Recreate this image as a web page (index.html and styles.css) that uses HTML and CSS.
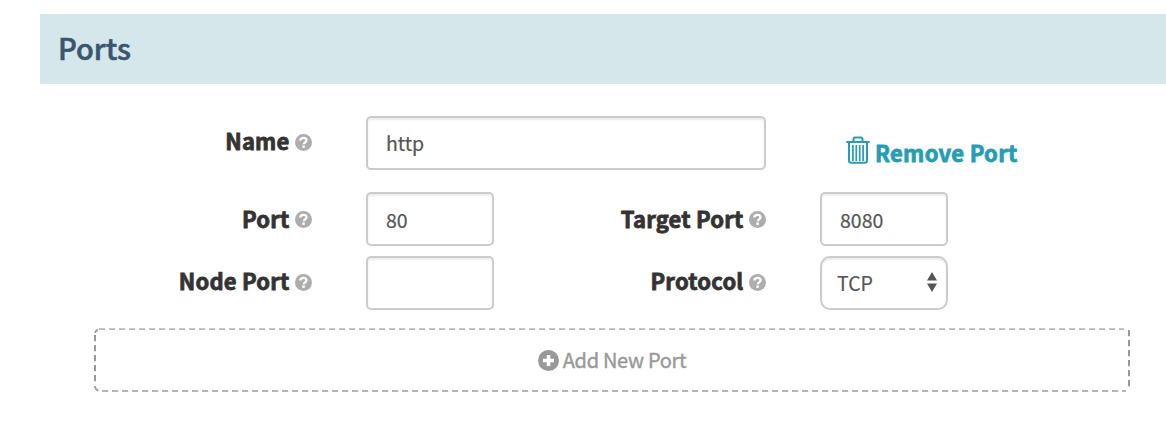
FILE: index.html
```html
<!DOCTYPE html>
<html lang="en">
<head>
<meta charset="utf-8">
<title>Ports</title>
<link rel="stylesheet" href="styles.css">
</head>
<body>
<svg class="defs" width="0" height="0">
  <symbol id="help" viewBox="0 0 17 17">
    <circle cx="8.5" cy="8.5" r="8.5" fill="#adadad"/>
    <path d="M5.300 6.500C5.400 4.500 6.700 3.900 8.600 3.900c1.800 0 2.900.9 2.900 2.400 0 2.200-2.600 1.900-2.600 3.900" fill="none" stroke="#fff" stroke-width="2.300"/>
    <path d="M7.300 11.400h2.500v2.500H7.300z" fill="#fff"/>
  </symbol>
</svg>
<section class="panel">
  <h2 class="panel-title"><span>Ports</span></h2>
  <form class="form">
    <div class="row row-name">
      <label class="label" for="name"><span>Name</span><svg class="help"><use href="#help"/></svg></label>
      <input class="field wide" id="name" value="http">
      <a class="remove"><svg class="trash" viewBox="0 0 24 28"><g fill="none" stroke="#259db5" stroke-width="2"><path d="M.3 6h23.400M7.500 5.800V3q0-1.500 1.500-1.500h6Q16.500 1.500 16.500 3V5.800M3 6.500V24.500q0 2.300 2.200 2.300H18.800q2.200 0 2.200-2.300V6.500"/><path d="M6.900 9V25M10.300 9V25M13.700 9V25M17.100 9V25" stroke-width="1.700"/></g></svg><span>Remove Port</span></a>
    </div>
    <div class="row row-port">
      <label class="label" for="port"><span>Port</span><svg class="help"><use href="#help"/></svg></label>
      <input class="field" id="port" value="80">
      <label class="label second" for="target"><span>Target Port</span><svg class="help"><use href="#help"/></svg></label>
      <input class="field" id="target" value="8080">
    </div>
    <div class="row row-node">
      <label class="label" for="node"><span>Node Port</span><svg class="help"><use href="#help"/></svg></label>
      <input class="field" id="node" value="">
      <label class="label second"><span>Protocol</span><svg class="help"><use href="#help"/></svg></label>
      <div class="field select"><span>TCP</span><svg class="arrows" viewBox="0 0 10 20"><path d="M5 0l5 8.500H0zM0 11.500h10L5 20z" fill="#555"/></svg></div>
    </div>
    <button class="add" type="button">
      <svg class="outline" viewBox="0 0 1036 64"><g fill="none" stroke-dasharray="6.200 3.800"><path d="M5 1.200H1030" stroke="#b8b8b8" stroke-width="1.700"/><path d="M8 63H1032" stroke="#b5b5b5" stroke-width="2"/><path d="M1 7V57M1035 2V60" stroke="#999" stroke-width="2"/><path d="M1.200 5Q1.500 2.500 4 1.700M1 58Q1 61.500 4.500 62.500" stroke="#a3a3a3" stroke-width="2" stroke-dasharray="none"/></g></svg>
      <svg class="plus" viewBox="0 0 21 21"><circle cx="10.500" cy="10.500" r="10.500" fill="#999"/><path d="M10.500 5v11M5 10.500h11" stroke="#fff" stroke-width="3.600"/></svg><span>Add New Port</span>
    </button>
  </form>
</section>
</body>
</html>
```
FILE: styles.css
```css
* { box-sizing: border-box; }
body {
  margin: 0;
  background: #fff;
  color: #333;
  font-family: "Noto Sans CJK SC", "Noto Sans", sans-serif;
  overflow: hidden;
}
.defs { position: absolute; }
.panel { padding: 14px 0 0 40px; }
.panel-title {
  display: flex;
  align-items: center;
  height: 70px;
  margin: 0;
  padding: 0 0 4px 18px;
  background: #d6e7eb;
  color: #3a566e;
  font-size: 29px;
  font-weight: 500;
  line-height: 1;
  -webkit-text-stroke: .6px #3a566e;
}
.form { padding: 32px 36px 0 54px; }
.row { display: flex; height: 54px; }
.row-port { margin-top: 22px; }
.row-node { margin-top: 10px; }
.label {
  display: flex;
  align-items: center;
  justify-content: flex-end;
  width: 218px;
  height: 52px;
  margin-right: 54px;
  font-size: 22px;
  font-weight: 700;
  line-height: 1;
  letter-spacing: .2px;
  white-space: nowrap;
  -webkit-text-stroke: .8px #333;
}
.label span { padding-bottom: 3px; }
.row-name .label span, .row-node .label span { padding-bottom: 4px; }
.row-port .label { height: 55px; }
.label.second { width: 272px; }
.help { width: 17px; height: 17px; margin-left: 5.500px; }
.field {
  width: 128px;
  height: 54px;
  border: 2px solid #ccc;
  border-radius: 5px;
  padding: 0 18px;
  background: #fff;
  box-shadow: inset 0 2px 2px rgba(0, 0, 0, .075);
  color: #555;
  font: 400 19.5px "Noto Sans CJK SC", "Noto Sans", sans-serif;
  -webkit-text-stroke: .2px #555;
}
.field.wide { width: 400px; padding-bottom: 2px; }
.select {
  display: flex;
  align-items: center;
  justify-content: space-between;
  padding: 0 9px 0 15px;
  border-radius: 10px;
}
.select span { padding-bottom: 2px; }
.arrows { width: 10px; height: 20px; margin-top: -2px; }
.remove {
  display: flex;
  height: 54px;
  margin-left: 80px;
  padding-top: 20px;
  color: #259db5;
  font-size: 22px;
  font-weight: 700;
  line-height: 33px;
  letter-spacing: .3px;
  white-space: nowrap;
  -webkit-text-stroke: .8px #259db5;
}
.trash { width: 24px; height: 28px; margin-right: 5px; }
.add {
  position: relative;
  display: flex;
  align-items: center;
  justify-content: center;
  width: 1036px;
  height: 64px;
  margin-top: 18px;
  padding: 0;
  border: 0;
  background: none;
  color: #999;
  font: 400 20px/1 "Noto Sans CJK SC", "Noto Sans", sans-serif;
  letter-spacing: -.3px;
  -webkit-text-stroke: .4px #999;
}
.outline { position: absolute; inset: 0; width: 1036px; height: 64px; }
.plus { width: 21px; height: 21px; margin-right: 4px; }
```
